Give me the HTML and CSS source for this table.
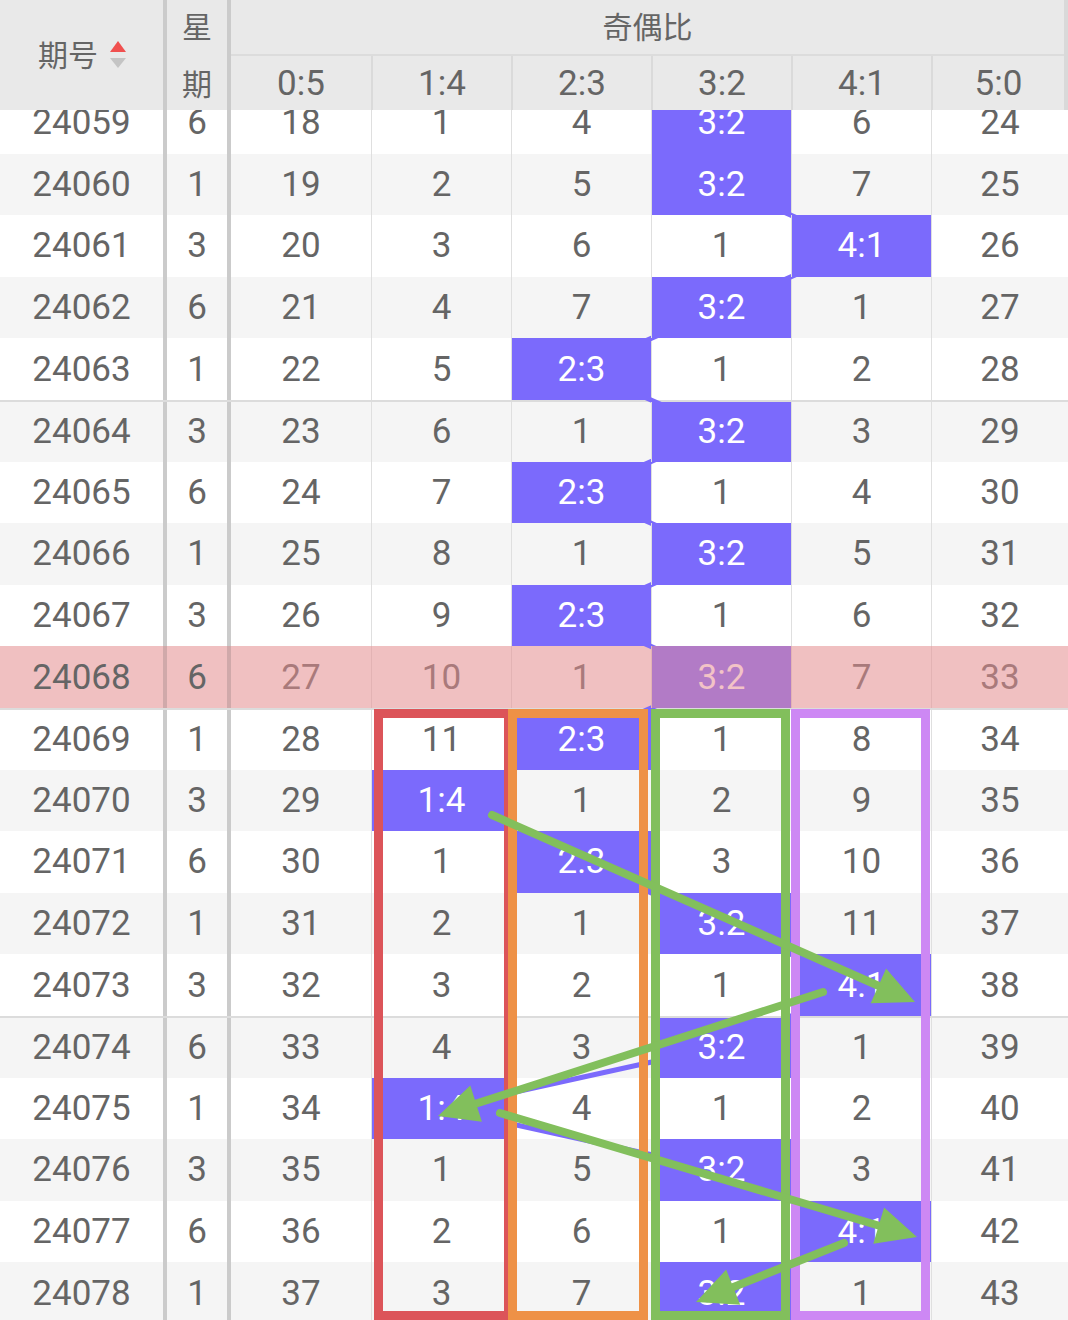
FILE: index.html
```html
<!DOCTYPE html>
<html lang="zh">
<head>
<meta charset="utf-8">
<title>奇偶比</title>
<link rel="stylesheet" href="styles.css">
</head>
<body>
<div class="page">
  <div class="head">
    <div class="h-id"><span>期号</span><svg class="sort" width="18" height="28" viewBox="0 0 18 28"><polygon points="9,0 17,11 1,11" fill="#f0504f"/><polygon points="1,17 17,17 9,27" fill="#c4c4c4"/></svg></div>
    <div class="h-week"><span>星</span><span>期</span></div>
    <div class="h-group">
      <div class="h-title">奇偶比</div>
      <div class="h-subs"><div>0:5</div><div>1:4</div><div>2:3</div><div>3:2</div><div>4:1</div><div>5:0</div></div>
    </div>
  </div>
  <div class="rows">
    <div class="row"><div class="c id">24059</div><div class="c wk">6</div><div class="c d">18</div><div class="c d">1</div><div class="c d">4</div><div class="c d p">3:2</div><div class="c d">6</div><div class="c d">24</div></div>
    <div class="row"><div class="c id">24060</div><div class="c wk">1</div><div class="c d">19</div><div class="c d">2</div><div class="c d">5</div><div class="c d p">3:2</div><div class="c d">7</div><div class="c d">25</div></div>
    <div class="row"><div class="c id">24061</div><div class="c wk">3</div><div class="c d">20</div><div class="c d">3</div><div class="c d">6</div><div class="c d">1</div><div class="c d p">4:1</div><div class="c d">26</div></div>
    <div class="row"><div class="c id">24062</div><div class="c wk">6</div><div class="c d">21</div><div class="c d">4</div><div class="c d">7</div><div class="c d p">3:2</div><div class="c d">1</div><div class="c d">27</div></div>
    <div class="row"><div class="c id">24063</div><div class="c wk">1</div><div class="c d">22</div><div class="c d">5</div><div class="c d p">2:3</div><div class="c d">1</div><div class="c d">2</div><div class="c d">28</div></div>
    <div class="row sep"><div class="c id">24064</div><div class="c wk">3</div><div class="c d">23</div><div class="c d">6</div><div class="c d">1</div><div class="c d p">3:2</div><div class="c d">3</div><div class="c d">29</div></div>
    <div class="row"><div class="c id">24065</div><div class="c wk">6</div><div class="c d">24</div><div class="c d">7</div><div class="c d p">2:3</div><div class="c d">1</div><div class="c d">4</div><div class="c d">30</div></div>
    <div class="row"><div class="c id">24066</div><div class="c wk">1</div><div class="c d">25</div><div class="c d">8</div><div class="c d">1</div><div class="c d p">3:2</div><div class="c d">5</div><div class="c d">31</div></div>
    <div class="row"><div class="c id">24067</div><div class="c wk">3</div><div class="c d">26</div><div class="c d">9</div><div class="c d p">2:3</div><div class="c d">1</div><div class="c d">6</div><div class="c d">32</div></div>
    <div class="row pink"><div class="c id">24068</div><div class="c wk">6</div><div class="c d">27</div><div class="c d">10</div><div class="c d">1</div><div class="c d p">3:2</div><div class="c d">7</div><div class="c d">33</div></div>
    <div class="row sep"><div class="c id">24069</div><div class="c wk">1</div><div class="c d">28</div><div class="c d">11</div><div class="c d p">2:3</div><div class="c d">1</div><div class="c d">8</div><div class="c d">34</div></div>
    <div class="row"><div class="c id">24070</div><div class="c wk">3</div><div class="c d">29</div><div class="c d p">1:4</div><div class="c d">1</div><div class="c d">2</div><div class="c d">9</div><div class="c d">35</div></div>
    <div class="row"><div class="c id">24071</div><div class="c wk">6</div><div class="c d">30</div><div class="c d">1</div><div class="c d p">2:3</div><div class="c d">3</div><div class="c d">10</div><div class="c d">36</div></div>
    <div class="row"><div class="c id">24072</div><div class="c wk">1</div><div class="c d">31</div><div class="c d">2</div><div class="c d">1</div><div class="c d p">3:2</div><div class="c d">11</div><div class="c d">37</div></div>
    <div class="row"><div class="c id">24073</div><div class="c wk">3</div><div class="c d">32</div><div class="c d">3</div><div class="c d">2</div><div class="c d">1</div><div class="c d p">4:1</div><div class="c d">38</div></div>
    <div class="row sep"><div class="c id">24074</div><div class="c wk">6</div><div class="c d">33</div><div class="c d">4</div><div class="c d">3</div><div class="c d p">3:2</div><div class="c d">1</div><div class="c d">39</div></div>
    <div class="row"><div class="c id">24075</div><div class="c wk">1</div><div class="c d">34</div><div class="c d p">1:4</div><div class="c d">4</div><div class="c d">1</div><div class="c d">2</div><div class="c d">40</div></div>
    <div class="row"><div class="c id">24076</div><div class="c wk">3</div><div class="c d">35</div><div class="c d">1</div><div class="c d">5</div><div class="c d p">3:2</div><div class="c d">3</div><div class="c d">41</div></div>
    <div class="row"><div class="c id">24077</div><div class="c wk">6</div><div class="c d">36</div><div class="c d">2</div><div class="c d">6</div><div class="c d">1</div><div class="c d p">4:1</div><div class="c d">42</div></div>
    <div class="row"><div class="c id">24078</div><div class="c wk">1</div><div class="c d">37</div><div class="c d">3</div><div class="c d">7</div><div class="c d p">3:2</div><div class="c d">1</div><div class="c d">43</div></div>
  </div>
  <svg class="links" width="1068" height="1320" viewBox="0 0 1068 1320">
    <polyline fill="none" stroke="#7b6afc" stroke-width="5" stroke-linejoin="round" points="721,122.8 721,184.4 861,246 721,307.6 581,369.2 721,430.8 581,492.4 721,554 581,615.6 721,677.2 581,738.8 441,800.4 581,862 721,923.6 861,985.2 721,1046.8 441,1108.4 721,1170 861,1231.6 721,1293.2"/>
  </svg>
  <div class="box box-r"></div>
  <div class="box box-o"></div>
  <div class="box box-g"></div>
  <div class="box box-v"></div>
  <svg class="arrows" width="1068" height="1320" viewBox="0 0 1068 1320">
    <g stroke="#82bf5c" stroke-width="8" stroke-linecap="round" fill="none">
      <line x1="492" y1="815" x2="880" y2="986.5"/>
      <line x1="823" y1="992" x2="474" y2="1104.3"/>
      <line x1="500" y1="1113" x2="880" y2="1226"/>
      <line x1="844" y1="1243" x2="731" y2="1288"/>
    </g>
    <g fill="#82bf5c">
      <polygon points="915,1002 870.7,1003.2 886.1,968.4"/>
      <polygon points="438,1116 470.3,1085.6 481.9,1121.8"/>
      <polygon points="917,1237 873.3,1243.8 884.1,1207.4"/>
      <polygon points="696,1302 726.2,1269.6 740.2,1304.8"/>
    </g>
  </svg>
</div>
</body>
</html>
```
FILE: styles.css
```css
* { box-sizing: border-box; }
body { margin: 0; background: #fff; }
.page {
  position: relative;
  isolation: isolate;
  width: 1068px;
  height: 1320px;
  overflow: hidden;
  background: #fff;
  color: #656565;
  font-family: Roboto, "Noto Sans CJK SC", sans-serif;
}
.head {
  position: relative;
  z-index: 5;
  display: grid;
  grid-template-columns: 167px 64px 1fr;
  height: 110px;
  background: #e9e9e9;
}
.h-id {
  border-right: 4px solid #cbcbcb;
  display: flex;
  align-items: center;
  justify-content: center;
  gap: 11px;
  font-family: "Noto Sans CJK SC", sans-serif;
  font-size: 30px;
  padding-left: 2px;
  padding-bottom: 4px;
}
.sort { display: block; margin-top: 4px; }
.h-week {
  border-right: 4px solid #cbcbcb;
  display: flex;
  flex-direction: column;
  font-family: "Noto Sans CJK SC", sans-serif;
  font-size: 30px;
}
.h-week span {
  height: 55px;
  display: flex;
  align-items: center;
  justify-content: center;
  padding-bottom: 6px;
}
.h-week span + span { padding-bottom: 2px; }
.h-group {
  display: flex;
  flex-direction: column;
  border-right: 4px solid #d9d9d9;
}
.h-title {
  height: 56px;
  border-bottom: 2px solid #dcdcdc;
  display: flex;
  align-items: center;
  justify-content: center;
  font-family: "Noto Sans CJK SC", sans-serif;
  font-size: 30px;
  padding-bottom: 4px;
}
.h-subs {
  flex: 1;
  display: grid;
  grid-template-columns: repeat(5, 140px) 1fr;
  font-size: 35px;
}
.h-subs div {
  display: flex;
  align-items: center;
  justify-content: center;
}
.h-subs div + div { border-left: 2px solid #dadada; }

.rows { margin-top: -18px; }
.row {
  display: grid;
  grid-template-columns: 167px 64px repeat(5, 140px) 1fr;
  height: 61.6px;
  background: #fff;
}
.row:nth-child(even) { background: #f5f5f5; }
.row.sep { border-top: 2px solid #dcdcdc; }
.row.pink { background: #f0c0c1; }
.c {
  display: flex;
  align-items: center;
  justify-content: center;
  font-size: 35px;
  white-space: nowrap;
}
.c.id, .c.wk { border-right: 4px solid #cbcbcb; }
.c.d + .c.d { border-left: 1px solid #dfdfdf; }
.c.p {
  position: relative;
  z-index: 2;
  background: #7b6afc;
  color: #fff;
}
.row.pink .c.id, .row.pink .c.wk { border-right-color: #d0a9aa; }
.row.pink .c.d { color: #a97a7b; border-left-color: #e3b3b4; }
.row.pink .c.p { background: #b27bc6; color: #f2c3c6; }

.links {
  position: absolute;
  left: 0;
  top: 0;
  z-index: 1;
  pointer-events: none;
}
.box {
  position: absolute;
  top: 709px;
  height: 611px;
  border: 9px solid;
  z-index: 3;
}
.box-r { left: 374px; width: 139px; border-color: #dc5459; }
.box-o { left: 508px; width: 140px; border-color: #ee9146; }
.box-g { left: 651px; width: 139px; border-color: #82bf5c; }
.box-v { left: 791px; width: 139px; border-color: #cd88f4; }
.arrows {
  position: absolute;
  left: 0;
  top: 0;
  z-index: 4;
  pointer-events: none;
}
```
